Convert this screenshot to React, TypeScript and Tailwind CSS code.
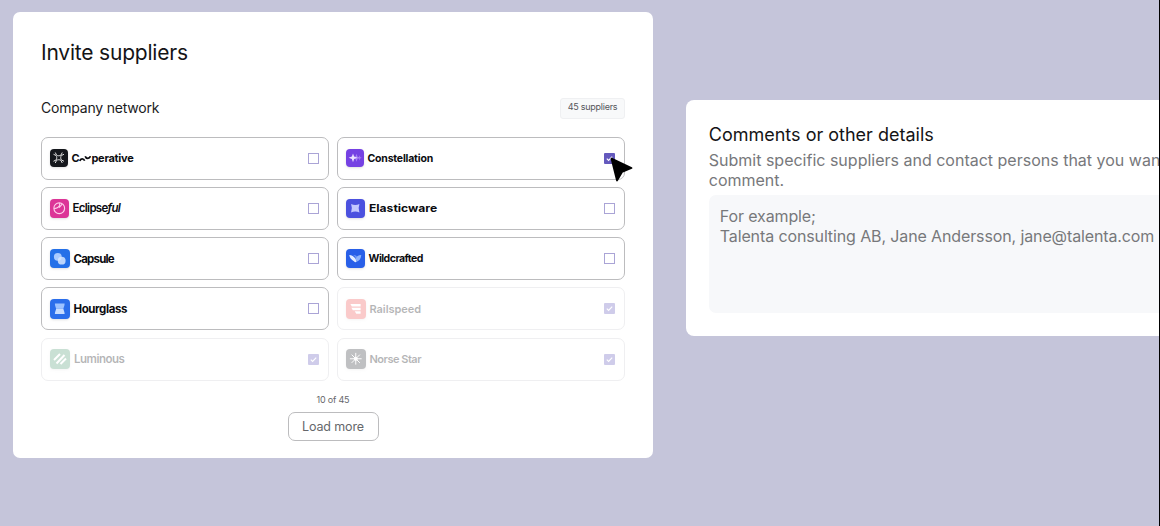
import type { ReactNode } from "react";

type Supplier = {
    name: ReactNode;
    nameClass: string;
    logoClass: string;
    logo: ReactNode;
    checked?: boolean;
    disabled?: boolean;
};

const suppliers: Supplier[] = [
    {
        name: (
            <>
                C
                <svg viewBox="0 0 12 8" className="h-[8px] w-[12px]" fill="none" stroke="currentColor" strokeWidth="1.7">
                    <path d="M.8 7C1.400 4.200 4.800 4.200 5.600 6.800M6.200 2.200C7 5 10.600 5 11.400 2.200" />
                </svg>
                perative
            </>
        ),
        nameClass: "flex items-center text-[11px] font-bold tracking-[-0.25px]",
        logoClass: "size-[17.5px] bg-[#15171c]",
        logo: (
            <g fill="none" stroke="#e4e4e4" strokeWidth="1.1">
                <path d="M6 4l1.500 3c1.500 1 3.500 1 5 0L14 4M6 16l1.500-3c1.500-1 3.500-1 5 0L14 16M4 6l3 1.500c1 1.500 1 3.500 0 5L4 14M16 6l-3 1.500c-1 1.500-1 3.500 0 5L16 14" />
            </g>
        ),
    },
    {
        name: "Constellation",
        nameClass: "pt-px text-[10.5px] font-bold tracking-[-0.2px]",
        logoClass: "size-[17.5px] bg-[#7541e3]",
        logo: (
            <g>
                <path d="M15.500 7l.8 2.200 1.700.8-1.700.8-.8 2.200-.8-2.200L13 10l1.700-.8z" fill="#9f75ee" />
                <path d="M12 5.500l1.200 3.300L16 10l-2.800 1.200L12 14.500l-1.200-3.300L8 10l2.800-1.200z" fill="#a67ff3" />
                <path d="M8 5l1.300 3.700L13 10l-3.700 1.300L8 15l-1.300-3.700L3 10l3.700-1.300z" fill="#eadfff" />
            </g>
        ),
    },
    {
        name: (
            <>
                Eclipse<i>ful</i>
            </>
        ),
        nameClass: "text-[11.5px] font-semibold tracking-[-0.7px]",
        logoClass: "size-[18.5px] bg-[#dc3597]",
        logo: (
            <g fill="none" stroke="#ffd0ec" strokeWidth="1.2">
                <circle cx="10" cy="10" r="5.800" />
                <path d="M10.500 4.400c.4 3.200-1.500 5.400-6 6M9.800 9.400l3.400-3.900" />
            </g>
        ),
    },
    {
        name: "Elasticware",
        nameClass: "origin-left scale-x-[1.15] pt-px text-[10.5px] font-bold",
        logoClass: "size-[18.5px] bg-[#4b51df]",
        logo: <path d="M5.500 5.500Q10 7.500 14.500 5.500 12.800 10 14.500 14.500 10 12.500 5.500 14.500 7.200 10 5.500 5.500z" fill="#c3c8ff" />,
    },
    {
        name: "Capsule",
        nameClass: "pt-px text-[11.5px] font-bold tracking-[-0.8px]",
        logoClass: "size-[19.5px] bg-[#2470e8]",
        logo: (
            <g>
                <circle cx="8" cy="8" r="4" fill="#a9caff" />
                <circle cx="12" cy="12" r="4" fill="#d6e6ff" fillOpacity=".85" />
            </g>
        ),
    },
    {
        name: "Wildcrafted",
        nameClass: "pt-px text-[10.5px] font-bold tracking-[-0.5px]",
        logoClass: "size-[18.5px] bg-[#285fe8]",
        logo: (
            <g>
                <path d="M3.500 6.500c2.700.2 5 1.500 7 4.300l1 3c-1 .8-2 .4-3-.6C6 11.500 4 10 3.500 6.500z" fill="#e3edff" />
                <path d="M16.500 6.500c-3.400.2-4.800 1.200-6.300 3.700l1.300 3.600c3-1 4.700-3.300 5-7.300z" fill="#8db2fb" />
                <path d="M7 6.500c1.800.3 2.800 1.500 3.400 3.400l1.600-2c-1.400-1-2.800-1.400-5-1.400z" fill="#6b97f6" />
            </g>
        ),
    },
    {
        name: "Hourglass",
        nameClass: "text-[11.5px] font-bold tracking-[-0.4px]",
        logoClass: "size-[19.5px] bg-[#2a6eeb]",
        logo: (
            <g>
                <path d="M5 4.500h10c0 2.500-1 3.800-1.300 5.500H6.300C6 8.300 5 7 5 4.500z" fill="#9cc2ff" />
                <path d="M6.300 10h7.400c.3 1.700 1.300 3 1.300 5.500H5c0-2.500 1-3.800 1.300-5.500z" fill="#c6dcff" />
            </g>
        ),
    },
    {
        name: "Railspeed",
        nameClass: "text-[11px] font-semibold tracking-[-0.05px]",
        logoClass: "size-[19.5px] bg-[#f05252]",
        logo: <path d="M4.500 5H15v2.700H6zM5.500 9H15v2.500H7zM9 12.500h6V15h-4.500z" fill="#fff" />,
        checked: true,
        disabled: true,
    },
    {
        name: "Luminous",
        nameClass: "text-[11.5px] font-semibold tracking-[-0.5px]",
        logoClass: "size-[20px] bg-[#4f9a72]",
        logo: <path d="M4 11l6-6M6.500 14.500l8-8.500M10.500 15l5.500-5.500" fill="none" stroke="#fff" strokeWidth="2" />,
        checked: true,
        disabled: true,
    },
    {
        name: "Norse Star",
        nameClass: "text-[11px] font-semibold tracking-[-0.5px]",
        logoClass: "size-[19.5px] bg-[#303238]",
        logo: (
            <g fill="none" stroke="#fff" strokeWidth="1">
                <path d="M10 4v12M4 10h12M5.800 5.800l8.400 8.400M14.200 5.800l-8.400 8.400" />
                <circle cx="10" cy="10" r="1.600" fill="#fff" />
            </g>
        ),
        checked: true,
        disabled: true,
    },
];

function Checkbox({ checked }: { checked?: boolean }) {
    if (!checked) {
        return <span className="size-[11px] border border-[#aaa4d6] bg-white" />;
    }
    return (
        <span className="flex size-[11px] items-center justify-center rounded-[1px] bg-[#6459bd]">
            <svg viewBox="0 0 10 10" className="size-[9px]" fill="none" stroke="#fff" strokeWidth="1.3">
                <path d="M2 5.200l2 2L8 3" />
            </svg>
        </span>
    );
}

function SupplierCard({ supplier }: { supplier: Supplier }) {
    return (
        <div
            className={`flex h-[43px] items-center rounded-[7px] border pr-[9px] pl-2 ${
                supplier.disabled ? "border-[#efeff1]" : "border-[#bcbcbe]"
            }`}
        >
            <div className={`flex flex-1 items-center gap-1 ${supplier.disabled ? "opacity-30" : ""}`}>
                <span className={`shrink-0 rounded-[4px] shadow-sm ${supplier.logoClass}`}>
                    <svg viewBox="0 0 20 20" className="size-full">
                        {supplier.logo}
                    </svg>
                </span>
                <span className={`leading-4 whitespace-nowrap text-[#0b0c10] ${supplier.nameClass}`}>{supplier.name}</span>
            </div>
            <div className={supplier.disabled ? "flex opacity-30" : "flex"}>
                <Checkbox checked={supplier.checked || supplier.name === "Constellation"} />
            </div>
        </div>
    );
}

export default function App() {
    return (
        <div className="relative flex h-[526px] w-[1160px] items-start overflow-hidden bg-[#c5c5da] pt-[11.75px] pl-[13.250px] font-['Inter',sans-serif]">
            <section className="h-[446px] w-[640px] shrink-0 rounded-[7px] bg-white px-[27.750px] pt-[27.250px]">
                <h1 className="text-[21px] leading-7 tracking-[-0.2px] text-[#141416]">
                    <span>Invite suppliers</span>
                </h1>
                <div className="mt-[31px] flex h-[21px] w-[584px] items-center justify-between">
                    <h2 className="pb-px text-[14px] leading-5 tracking-[-0.2px] text-[#1b1b1d]">
                        <span>Company network</span>
                    </h2>
                    <span className="flex h-[21px] w-[65px] items-center justify-center rounded-[3px] border border-[#eff0f2] bg-[#f8f9fa] pb-[3px] text-[9px] tracking-[-0.25px] whitespace-nowrap text-[#55565a]">
                        45 suppliers
                    </span>
                </div>
                <div className="mt-[17.5px] grid w-[584px] grid-cols-[288px_288px] gap-x-2 gap-y-[7.300px]">
                    {suppliers.map((supplier, i) => (
                        <SupplierCard key={i} supplier={supplier} />
                    ))}
                </div>
                <div className="mt-[12px] flex w-[584px] flex-col items-center">
                    <span className="text-[9px] leading-[14px] tracking-[-0.2px] text-[#66676b]">10 of 45</span>
                    <button className="mt-[5px] h-[29px] w-[91px] rounded-[7px] border border-[#bcbcbe] pt-[2px] text-[12.500px] tracking-[-0.15px] text-[#66676b]">
                        Load more
                    </button>
                </div>
            </section>

            <section className="mt-[88.250px] ml-[33px] h-[236px] w-[620px] shrink-0 rounded-[8px] bg-white pt-[24px] pl-[22.5px]">
                <h2 className="text-[18px] leading-[22px] text-[#141416]">
                    <span>Comments or other details</span>
                </h2>
                <p className="mt-[3.5px] text-[16px] leading-[20.500px] whitespace-nowrap text-[#77787b]">
                    <span>Submit specific suppliers and contact persons that you want</span>
                    <br />
                    <span>comment.</span>
                </p>
                <div className="mt-[4.5px] h-[118px] rounded-l-[7px] bg-[#f7f8fa] px-[11px] pt-[10.500px] text-[16px] leading-[20.500px] tracking-[-0.12px] whitespace-nowrap text-[#77787b]">
                    <p>For example;</p>
                    <p>Talenta consulting AB, Jane Andersson, jane@talenta.com</p>
                </div>
            </section>

            <div className="absolute inset-y-0 right-0 w-px bg-black" />

            <svg viewBox="0 0 24 26" className="absolute top-[157px] left-[610px] h-[26px] w-[24px]">
                <path d="M1.500 1.500L21.500 11 12 15 7 23.500z" fill="#000" stroke="#000" strokeWidth="1.800" strokeLinejoin="round" />
            </svg>
        </div>
    );
}
